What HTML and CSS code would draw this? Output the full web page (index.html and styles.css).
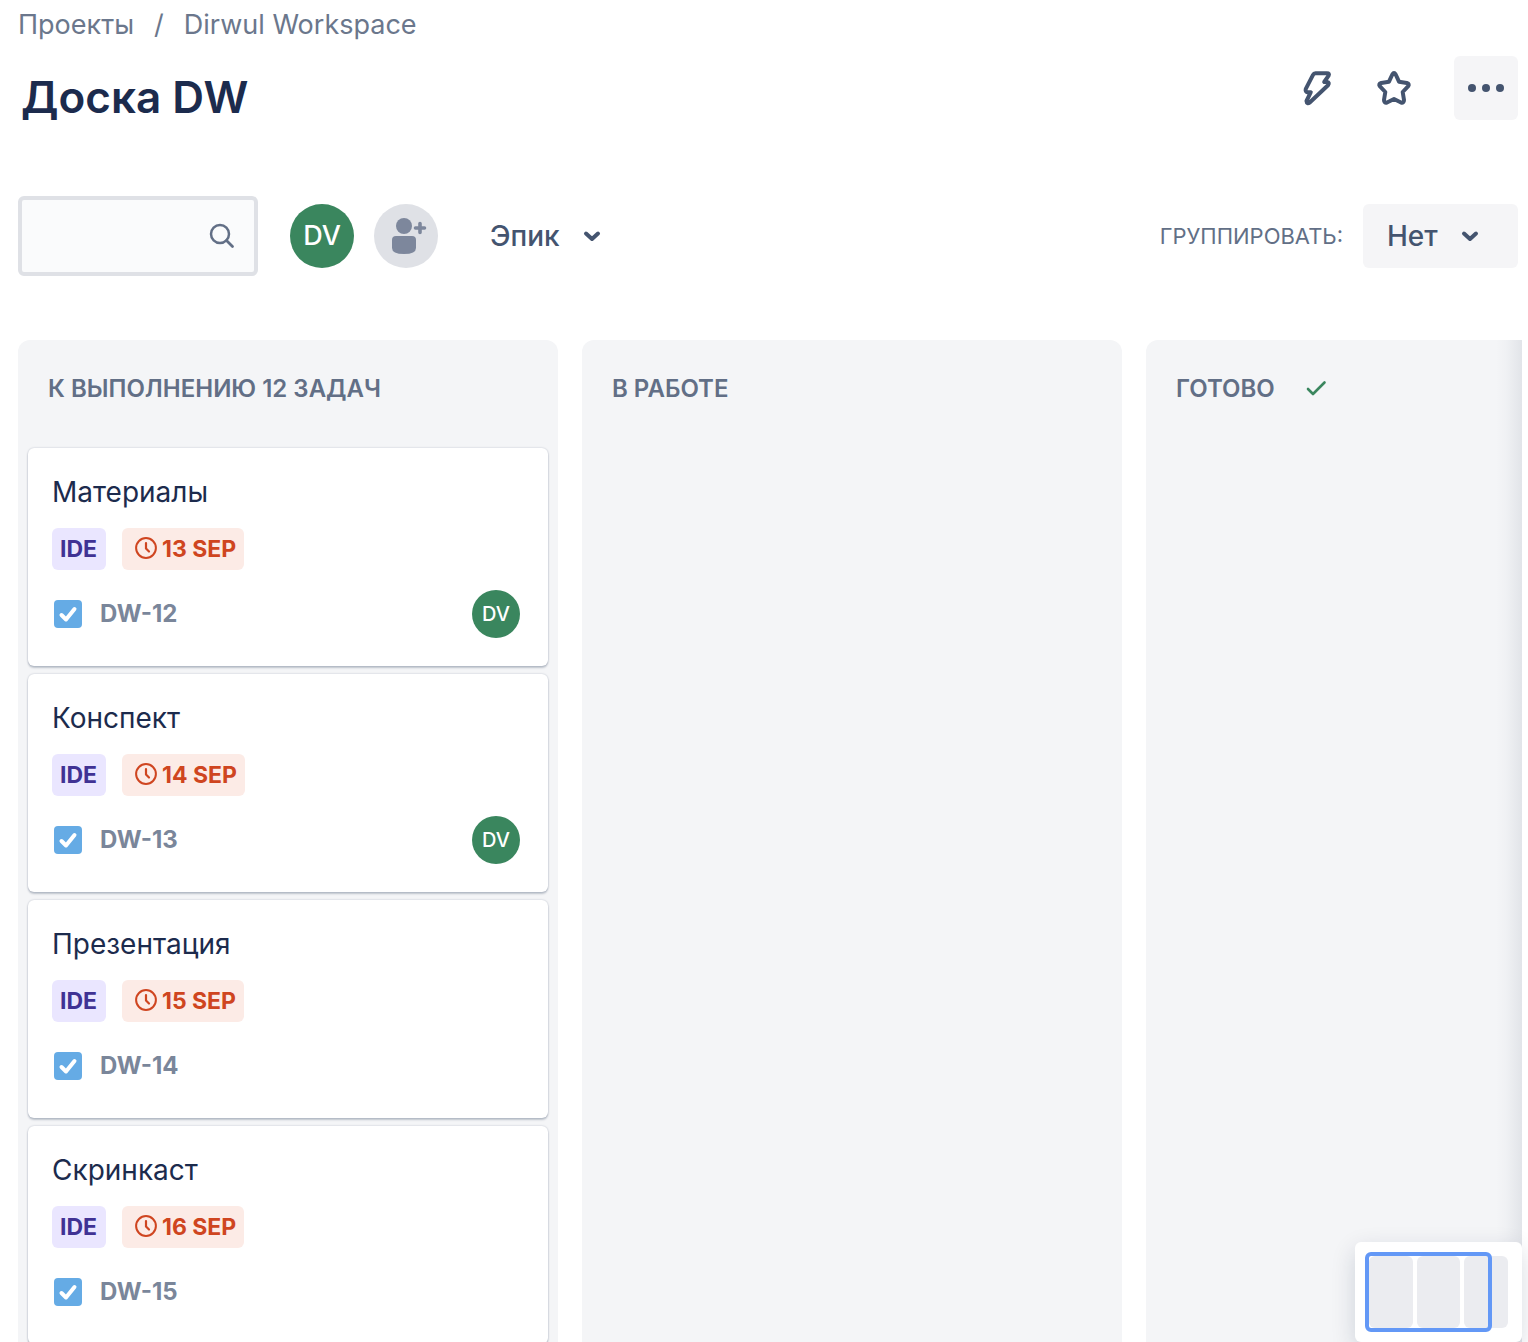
FILE: index.html
```html
<!DOCTYPE html>
<html lang="ru">
<head>
<meta charset="utf-8">
<meta name="viewport" content="width=device-width, initial-scale=1">
<title>Доска DW</title>
<link rel="stylesheet" href="styles.css">
</head>
<body>
<svg class="symbols" aria-hidden="true">
  <symbol id="chevron" viewBox="0 0 20 14"><path d="M4 4.500l6 5.500l6-5.500" fill="none" stroke="currentColor" stroke-width="4" stroke-linecap="round" stroke-linejoin="round"/></symbol>
  <symbol id="clock" viewBox="0 0 24 24"><circle cx="12" cy="11" r="9.900" fill="none" stroke="currentColor" stroke-width="2"/><path d="M12 6v5.500l3 3" fill="none" stroke="currentColor" stroke-width="2.200" stroke-linecap="round" stroke-linejoin="round"/></symbol>
  <symbol id="tick" viewBox="0 0 28 28"><path d="M7.500 15l4.500 4.500l8.500-10.500" fill="none" stroke="currentColor" stroke-width="4" stroke-linecap="round" stroke-linejoin="round"/></symbol>
</svg>
<header class="header">
  <nav class="breadcrumbs" aria-label="Навигация">
    <a href="#">Проекты</a><span>/</span><a href="#">Dirwul Workspace</a>
  </nav>
  <div class="title-row">
    <h1 class="title">Доска DW</h1>
    <div class="actions">
      <button class="icon-button" type="button" aria-label="Автоматизация">
        <svg width="40" height="40" viewBox="0 0 40 40"><path d="M19.500 5.200H31Q33.800 5.200 32.600 7.600L28.200 14H31Q34 14.500 32 17.200L14 34.300Q10.800 36.600 10.500 33L14.800 24.200H11.500Q9 23.600 9.800 20.800L17 6.800Q17.800 5.200 19.500 5.200Z" fill="none" stroke="currentColor" stroke-width="4" stroke-linejoin="round"/></svg>
      </button>
      <button class="icon-button" type="button" aria-label="Добавить в избранное">
        <svg width="40" height="40" viewBox="0 0 40 40"><path d="M18.300 6.500Q20 3.700 21.700 6.500L25 13.700L32.800 14.900Q36 15.900 34 18.400L28.700 24L30 32Q30 35.300 27 34.500L20 31L13 34.500Q10 35.300 10 32L11.300 24L6 18.400Q4 15.900 7.200 14.900L15 13.700Z" fill="none" stroke="currentColor" stroke-width="4" stroke-linejoin="round"/></svg>
      </button>
      <button class="icon-button icon-button-filled" type="button" aria-label="Ещё">
        <svg width="40" height="40" viewBox="0 0 40 40" fill="currentColor"><circle cx="6" cy="20" r="4"/><circle cx="20" cy="20" r="4"/><circle cx="34" cy="20" r="4"/></svg>
      </button>
    </div>
  </div>
</header>
<section class="toolbar" aria-label="Фильтры">
  <label class="search">
    <input type="search" aria-label="Поиск по доске">
    <svg width="28" height="28" viewBox="0 0 28 28"><circle cx="12" cy="12" r="9" fill="none" stroke="currentColor" stroke-width="2.500"/><path d="M18.500 18.500l6 6" stroke="currentColor" stroke-width="2.800" stroke-linecap="round"/></svg>
  </label>
  <div class="people">
    <button class="avatar avatar-large" type="button">DV</button>
    <button class="avatar avatar-add" type="button" aria-label="Добавить людей">
      <svg width="64" height="64" viewBox="0 0 64 64"><circle cx="30" cy="22" r="8" fill="currentColor"/><path d="M18 36q0-4 4-4h16q4 0 4 4v8q0 6-12 6t-12-6z" fill="currentColor"/><path d="M46 19.500v9M41.500 24h9" stroke="currentColor" stroke-width="3.600" stroke-linecap="round"/></svg>
    </button>
  </div>
  <button class="menu-button" type="button" aria-haspopup="true">Эпик<svg width="20" height="14"><use href="#chevron"/></svg></button>
  <div class="grouping">
    <label for="group">ГРУППИРОВАТЬ:</label>
    <div class="select">
      <select id="group"><option>Нет</option></select>
      <svg width="20" height="14"><use href="#chevron"/></svg>
    </div>
  </div>
</section>
<main class="board">
  <div class="columns">
    <section class="column">
      <h2 class="column-title">К ВЫПОЛНЕНИЮ 12 ЗАДАЧ</h2>
      <article class="card">
        <h3 class="card-title">Материалы</h3>
        <div class="tags"><span class="tag">IDE</span><span class="tag tag-due"><svg width="24" height="24"><use href="#clock"/></svg>13 SEP</span></div>
        <div class="card-footer"><label class="issue"><span class="check"><input type="checkbox" checked><svg width="28" height="28"><use href="#tick"/></svg></span>DW-12</label><span class="avatar">DV</span></div>
      </article>
      <article class="card">
        <h3 class="card-title">Конспект</h3>
        <div class="tags"><span class="tag">IDE</span><span class="tag tag-due"><svg width="24" height="24"><use href="#clock"/></svg>14 SEP</span></div>
        <div class="card-footer"><label class="issue"><span class="check"><input type="checkbox" checked><svg width="28" height="28"><use href="#tick"/></svg></span>DW-13</label><span class="avatar">DV</span></div>
      </article>
      <article class="card">
        <h3 class="card-title">Презентация</h3>
        <div class="tags"><span class="tag">IDE</span><span class="tag tag-due"><svg width="24" height="24"><use href="#clock"/></svg>15 SEP</span></div>
        <div class="card-footer"><label class="issue"><span class="check"><input type="checkbox" checked><svg width="28" height="28"><use href="#tick"/></svg></span>DW-14</label></div>
      </article>
      <article class="card">
        <h3 class="card-title">Скринкаст</h3>
        <div class="tags"><span class="tag">IDE</span><span class="tag tag-due"><svg width="24" height="24"><use href="#clock"/></svg>16 SEP</span></div>
        <div class="card-footer"><label class="issue"><span class="check"><input type="checkbox" checked><svg width="28" height="28"><use href="#tick"/></svg></span>DW-15</label></div>
      </article>
    </section>
    <section class="column">
      <h2 class="column-title">В РАБОТЕ</h2>
    </section>
    <section class="column">
      <h2 class="column-title">ГОТОВО <svg class="done" width="24" height="24" viewBox="0 0 24 24"><path d="M5 12l5 5L21.500 5.500" fill="none" stroke="currentColor" stroke-width="2.600" stroke-linecap="round" stroke-linejoin="round"/></svg></h2>
    </section>
  </div>
  <div class="minimap" aria-hidden="true">
    <i></i><i></i><i></i>
    <div class="minimap-frame"></div>
  </div>
</main>
</body>
</html>
```
FILE: styles.css
```css
* {
  box-sizing: border-box;
}

body {
  display: flex;
  flex-direction: column;
  height: 100vh;
  margin: 0;
  overflow: hidden;
  background: #fff;
  color: #1c2b4d;
  font-family: Inter, "Liberation Sans", sans-serif;
  font-size: 28px;
  line-height: 40px;
}

h1,
h2,
h3 {
  margin: 0;
}

button,
input,
select {
  margin: 0;
  border: 0;
  font: inherit;
  color: inherit;
}

button {
  padding: 0;
  background: none;
}

svg {
  display: block;
  flex: none;
}

.symbols {
  position: absolute;
  width: 0;
  height: 0;
}

.header {
  padding: 5px 10px 0 18px;
}

.breadcrumbs {
  display: flex;
  gap: 20px;
  color: #6b778c;
  font-size: 27px;
}

.breadcrumbs a {
  color: inherit;
  text-decoration: none;
}

.title-row {
  display: flex;
  justify-content: space-between;
  align-items: flex-start;
  padding: 11px 0 0 3px;
}

.title {
  padding-top: 11px;
  font-size: 44px;
  font-weight: 600;
  line-height: 60px;
}

.actions {
  display: flex;
  gap: 14px;
  color: #44546f;
}

.icon-button {
  display: grid;
  place-items: center;
  width: 64px;
  height: 64px;
  border-radius: 6px;
}

.icon-button-filled {
  margin-left: 14px;
  background: #f5f5f7;
}

.toolbar {
  display: flex;
  align-items: center;
  padding: 69px 10px 64px 18px;
  color: #44546f;
}

.search {
  display: grid;
  align-items: center;
  width: 240px;
  height: 80px;
  margin-right: 32px;
  color: #626f86;
}

.search > * {
  grid-area: 1 / 1;
}

.search input {
  width: 100%;
  height: 100%;
  padding: 0 56px 0 16px;
  border: 4px solid #dfe1e6;
  border-radius: 6px;
  background: #fafbfc;
  appearance: none;
}

.search svg {
  justify-self: end;
  margin-right: 22px;
}

.people {
  display: flex;
  gap: 20px;
  margin-right: 52px;
}

.avatar {
  display: grid;
  place-items: center;
  width: 48px;
  height: 48px;
  border-radius: 50%;
  background: #3a865e;
  color: #fff;
  font-size: 20px;
  font-weight: 500;
}

.avatar-large,
.avatar-add {
  width: 64px;
  height: 64px;
  font-size: 27px;
}

.avatar-add {
  background: #dfe1e6;
  color: #7d879c;
}

.menu-button {
  display: flex;
  align-items: center;
  gap: 22px;
  font-weight: 500;
}

.grouping {
  display: flex;
  align-items: center;
  gap: 20px;
  margin-left: auto;
  color: #626f86;
  font-size: 22px;
}

.select {
  display: grid;
  align-items: center;
  width: 155px;
  height: 64px;
  color: #44546f;
}

.select > * {
  grid-area: 1 / 1;
}

.select select {
  width: 100%;
  height: 100%;
  padding: 0 60px 0 24px;
  border-radius: 6px;
  background: #f5f5f7;
  font-size: 28px;
  font-weight: 500;
  appearance: none;
}

.select svg {
  justify-self: end;
  margin-right: 38px;
  pointer-events: none;
}

.board {
  position: relative;
  flex: 1;
  min-height: 0;
  margin-right: 6px;
}

.columns {
  display: flex;
  gap: 24px;
  height: 100%;
  padding-left: 18px;
  overflow: hidden;
}

.board::after {
  content: "";
  position: absolute;
  inset: 0 0 0 auto;
  width: 26px;
  background: linear-gradient(to right, rgba(9, 30, 66, 0), rgba(9, 30, 66, 0.02) 40%, rgba(9, 30, 66, 0.08));
}

.column {
  display: flex;
  flex: none;
  flex-direction: column;
  gap: 8px;
  width: 540px;
  padding: 0 10px;
  border-radius: 12px 12px 0 0;
  background: #f4f5f7;
}

.column-title {
  display: flex;
  flex: none;
  align-items: center;
  gap: 28px;
  height: 100px;
  padding: 0 20px 3px;
  color: #626f86;
  font-size: 24px;
  font-weight: 600;
}

.done {
  color: #3a865e;
}

.card {
  flex: none;
  padding: 24px 28px 28px 24px;
  border-radius: 6px;
  background: #fff;
  box-shadow: 0 2px 2px rgba(9, 30, 66, 0.22), 0 0 2px rgba(9, 30, 66, 0.24);
}

.card-title {
  font-size: 28px;
  font-weight: 400;
}

.tags {
  display: flex;
  gap: 16px;
  margin: 16px 0 20px;
}

.tag {
  display: flex;
  align-items: center;
  min-width: 54px;
  height: 42px;
  padding: 0 8px;
  border-radius: 6px;
  background: #eae6ff;
  color: #403294;
  font-size: 23px;
  font-weight: 700;
}

.tag-due {
  gap: 4px;
  padding-left: 12px;
  background: #fcebe6;
  color: #cf4520;
}

.card-footer {
  display: flex;
  align-items: center;
  justify-content: space-between;
  min-height: 48px;
}

.issue {
  display: flex;
  align-items: center;
  gap: 18px;
  padding-left: 2px;
  color: #7a869a;
  font-size: 24px;
  font-weight: 700;
}

.check {
  display: grid;
  color: #fff;
}

.check > * {
  grid-area: 1 / 1;
}

.check input {
  width: 28px;
  height: 28px;
  border-radius: 4px;
  background: #65abe5;
  appearance: none;
}

.check svg {
  pointer-events: none;
}

.minimap {
  position: absolute;
  right: 0;
  bottom: 0;
  z-index: 1;
  display: grid;
  grid-template-columns: repeat(3, 1fr);
  gap: 4px;
  width: 167px;
  height: 100px;
  padding: 14px;
  border-radius: 6px;
  background: #fff;
  box-shadow: 0 8px 24px rgba(9, 30, 66, 0.16);
}

.minimap i {
  border-radius: 6px;
  background: #ebecf0;
}

.minimap-frame {
  position: absolute;
  inset: 10px 30px 10px 10px;
  border: 4px solid #6398f6;
  border-radius: 6px;
}
```
